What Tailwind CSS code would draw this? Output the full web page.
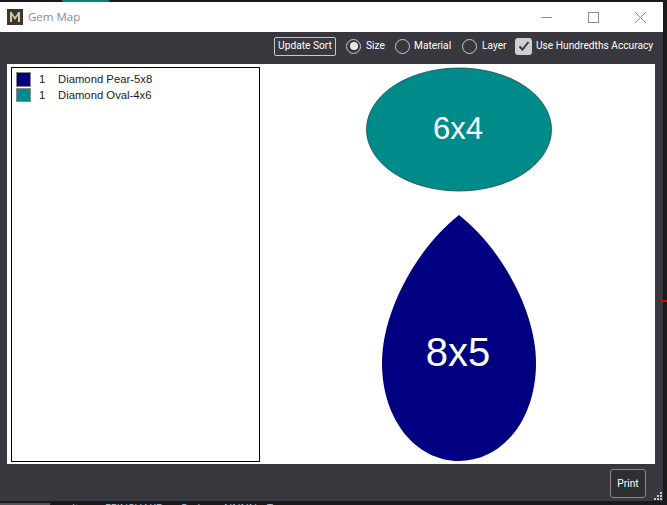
<!DOCTYPE html>
<html lang="en">
<head>
  <meta charset="UTF-8">
  <title>Gem Map</title>
  <script src="https://cdn.jsdelivr.net/npm/@tailwindcss/browser@4"></script>
</head>
<body class="bg-[#1a1a1a] w-[667px] h-[505px] overflow-hidden relative font-['Open_Sans',sans-serif]">

  <!-- Strip of the app behind the window -->
  <div class="h-[2px] flex">
    <div class="w-[62px]"></div>
    <div class="w-[47px] bg-[#0f7f74]"></div>
  </div>

  <!-- Window -->
  <div class="w-[663px] h-[499px] bg-[#38383e] flex flex-col">

    <!-- Title bar -->
    <div class="h-[30px] bg-white flex items-center">
      <div class="ml-[7px] w-4 h-4 bg-[#3a3733] flex items-center justify-center">
        <svg width="12" height="10" viewBox="0 0 12 10"><path d="M1 10V0h1.600L6 5l3.400-5H11v10H9V3.600L6 8 3 3.600V10z" fill="#d9c9a3"/></svg>
      </div>
      <span class="ml-[5px] text-[11.5px] text-[#8a8a8a]">Gem Map</span>
      <div class="ml-auto flex items-center">
        <svg width="46" height="30" viewBox="0 0 46 30"><path d="M17 15.500h11" stroke="#8c8c8c" fill="none"/></svg>
        <svg width="46" height="30" viewBox="0 0 46 30"><rect x="18.500" y="10.500" width="10" height="10" stroke="#8c8c8c" fill="none"/></svg>
        <svg width="46" height="30" viewBox="0 0 46 30" class="mr-[1px]"><path d="M19 10l11 11M30 10l-11 11" stroke="#8c8c8c" fill="none"/></svg>
      </div>
    </div>

    <!-- Toolbar -->
    <div class="h-[32px] pb-[4px] flex items-center whitespace-nowrap font-['Roboto',sans-serif] text-[10.2px] text-white pl-[274px]">
      <button class="h-[19px] w-[62px] border border-[#c8c8c8] rounded-[2px] flex items-center justify-center">Update Sort</button>
      <span class="ml-[10px] w-[15px] h-[15px] rounded-full border border-[#c8c8c8] flex items-center justify-center"><span class="w-2 h-2 rounded-full bg-[#e8e8e8]"></span></span>
      <span class="ml-[5px] w-[18px]">Size</span>
      <span class="ml-[11px] w-[15px] h-[15px] rounded-full border border-[#c8c8c8]"></span>
      <span class="ml-[4px] w-[37px]">Material</span>
      <span class="ml-[11px] w-[15px] h-[15px] rounded-full border border-[#c8c8c8]"></span>
      <span class="ml-[5px] w-[23px]">Layer</span>
      <span class="ml-[10px] w-[17px] h-[17px] rounded-[3px] bg-[#cfcfcf] flex items-center justify-center">
        <svg width="12" height="12" viewBox="0 0 12 12"><path d="M1.500 6.500l3 3 6-7.500" stroke="#38383e" stroke-width="2" fill="none"/></svg>
      </span>
      <span class="ml-[4px]">Use Hundredths Accuracy</span>
    </div>

    <!-- Map panel -->
    <div class="ml-[7px] w-[648px] h-[400px] bg-white flex pl-[4px]">
      <div class="mt-[3px] w-[249px] h-[395px] border border-black pl-[4px] pt-[4px] font-['Liberation_Sans',sans-serif] text-[11.3px] leading-[15px] text-[#1a1a1a]">
        <div class="flex items-start h-[16px]">
          <span class="w-[15px] h-[15px] bg-[#000080] border border-[#8a8a8a]"></span>
          <span class="ml-[8px] w-[19px]">1</span>
          <span>Diamond Pear-5x8</span>
        </div>
        <div class="flex items-start h-[15px]">
          <span class="w-[15px] h-[14px] bg-[#008b8b] border border-[#8a8a8a]"></span>
          <span class="ml-[8px] w-[19px]">1</span>
          <span>Diamond Oval-4x6</span>
        </div>
      </div>
      <svg width="395" height="398" viewBox="260 64 395 398" class="font-['Liberation_Sans',sans-serif]">
        <ellipse cx="459" cy="129.500" rx="92.500" ry="61.500" fill="#008b8b" stroke="#1a4a4a" stroke-width="0.800"/>
        <text x="458" y="139" text-anchor="middle" font-size="31" fill="white">6x4</text>
        <path d="M459 215C500 247 536 310 536 363C536 420 502 461 459 461C416 461 382 420 382 363C382 310 418 247 459 215Z" fill="#000080"/>
        <text x="458" y="366" text-anchor="middle" font-size="40" fill="white">8x5</text>
      </svg>
    </div>

    <!-- Footer -->
    <div class="flex-1 flex justify-end items-start relative">
      <button class="mt-[5px] mr-[17px] w-[36px] h-[29px] border border-[#8a8a8a] rounded-[3px] bg-[#2e2e33] font-['Roboto',sans-serif] text-[10.2px] text-white">Print</button>
      <svg width="10" height="10" viewBox="0 0 10 10" class="absolute right-0 bottom-0" fill="#c8c8c8">
        <rect x="7" y="1" width="2" height="2"/><rect x="4" y="4" width="2" height="2"/><rect x="7" y="4" width="2" height="2"/><rect x="1" y="7" width="2" height="2"/><rect x="4" y="7" width="2" height="2"/><rect x="7" y="7" width="2" height="2"/>
      </svg>
    </div>
  </div>

  <!-- Bits of the app showing past the window edge -->
  <div class="h-[4px] overflow-hidden flex items-start whitespace-nowrap text-[11px] leading-[12px] text-[#a9c4e4]">
    <span class="w-[50px] h-[2px] mt-[2px] bg-[#555]"></span>
    <span class="ml-[22px] mt-[1px] w-[33px]">Item</span>
    <span class="mt-[1px] w-[75px]">FEINSHAKE</span>
    <span class="mt-[1px] w-[44px]">Code</span>
    <span class="mt-[1px] w-[43px]">NNNN</span>
    <span class="mt-[1px]">T</span>
  </div>
  <div class="absolute left-[662px] top-[300px] w-[5px] h-[2px] bg-[#e00000]"></div>
</body>
</html>
